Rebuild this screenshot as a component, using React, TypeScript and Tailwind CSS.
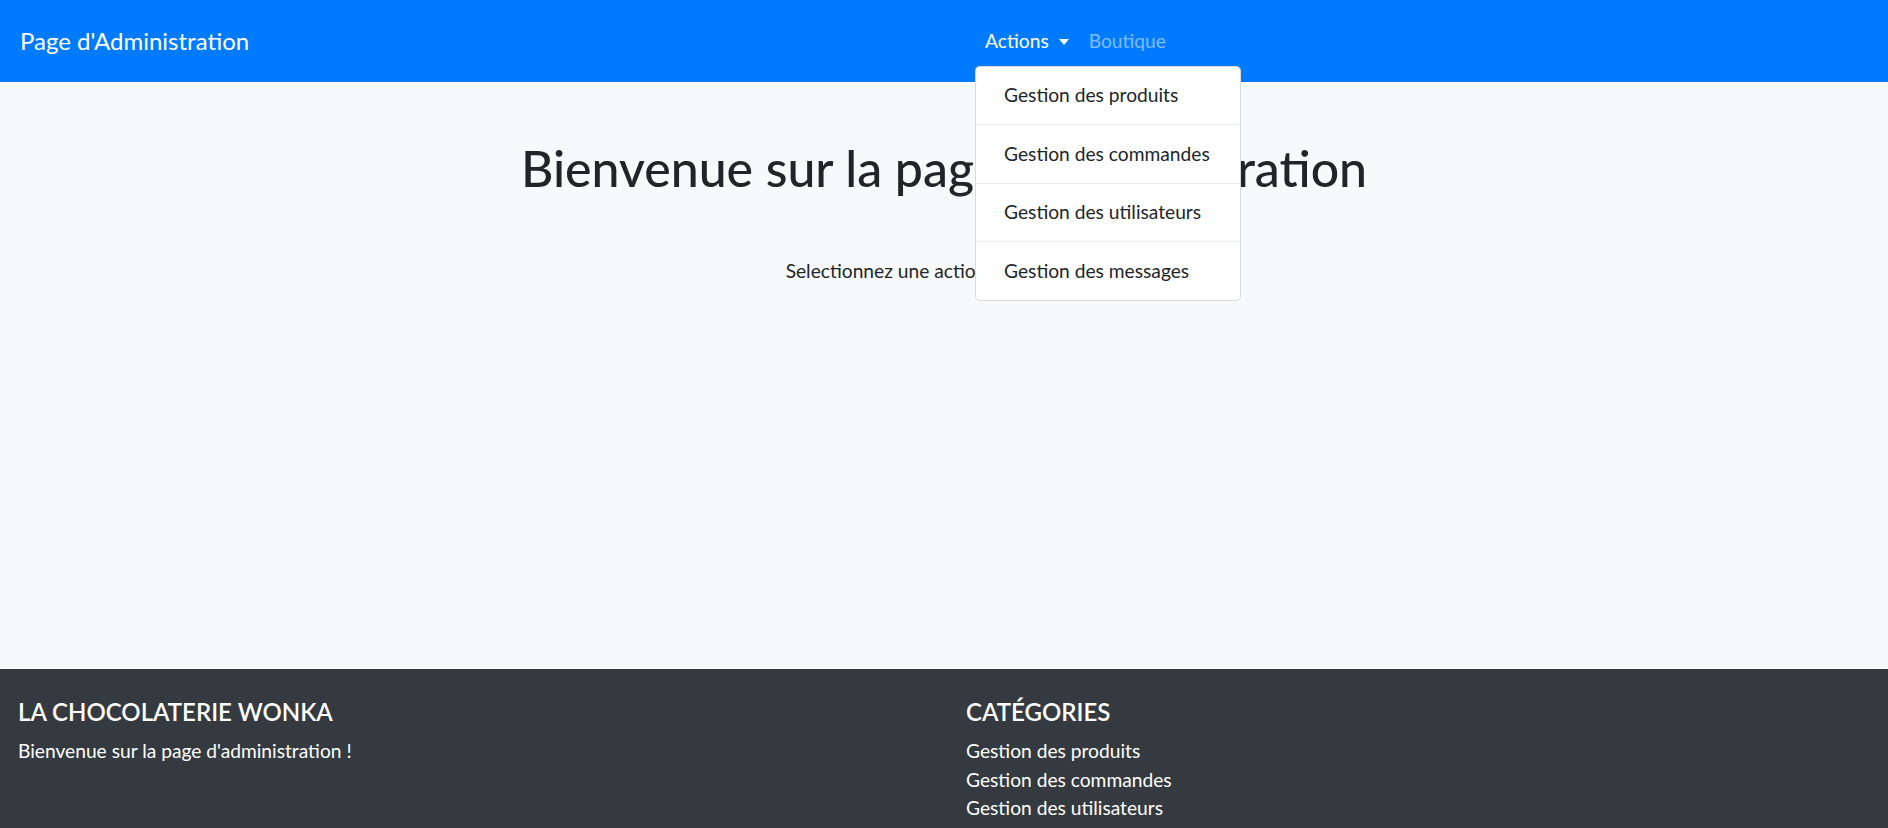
import React from 'react';

const actions = [
  'Gestion des produits',
  'Gestion des commandes',
  'Gestion des utilisateurs',
  'Gestion des messages',
];

function Navbar() {
  return (
    <nav className="flex h-[82px] shrink-0 items-center bg-[#007bff] px-[20px]">
      <div className="w-[263px] shrink-0 text-[24px] leading-[1.5] text-white">Page d'Administration</div>
      <div className="flex flex-1 justify-center">
        <div className="relative">
          <div className="flex items-center px-[10px] py-[10px] text-[19.2px] leading-[1.5] text-white">
            Actions
            <span className="ml-[10px] mt-[2px] h-0 w-0 border-x-[5px] border-t-[6px] border-x-transparent border-t-white" />
          </div>
          <div className="absolute left-0 top-[49px] z-10 w-[266px] overflow-hidden rounded-[5px] border border-black/15 bg-white">
            {actions.map((a, i) => (
              <div
                key={a}
                className={`px-[28px] py-[14.4px] text-[19.2px] leading-[1.5] text-[#212529] ${i > 0 ? 'border-t border-[#e9ecef]' : ''}`}
              >
                {a}
              </div>
            ))}
          </div>
        </div>
        <div className="px-[10px] py-[10px] text-[19.2px] leading-[1.5] text-white/50">Boutique</div>
      </div>
    </nav>
  );
}

export default function App() {
  return (
    <div className="flex h-[828px] flex-col overflow-hidden bg-[#f8f9fa] font-['Lato',sans-serif] text-[#212529]">
      <Navbar />
      <main className="flex h-[587px] shrink-0 flex-col items-center pt-[58px]">
        <h1 className="text-[50px] font-medium leading-[1.15]">Bienvenue sur la page d'administration</h1>
        <p className="mt-[59px] text-[19.2px] leading-[1.5]">Selectionnez une action dans le menu</p>
      </main>
      <footer className="grid min-h-0 flex-1 grid-cols-2 overflow-hidden bg-[#343a40] px-[18px] pt-[29px] text-white">
        <div>
          <h5 className="mb-[10px] text-[24px] font-semibold leading-[1.2]">LA CHOCOLATERIE WONKA</h5>
          <p className="text-[19.2px] leading-[1.5]">Bienvenue sur la page d'administration !</p>
        </div>
        <div className="pl-[22px]">
          <h5 className="mb-[10px] text-[24px] font-semibold leading-[1.2]">CATÉGORIES</h5>
          <ul className="text-[19.2px] leading-[1.5]">
            {actions.slice(0, 3).map((a) => (
              <li key={a}>{a}</li>
            ))}
          </ul>
        </div>
      </footer>
    </div>
  );
}
